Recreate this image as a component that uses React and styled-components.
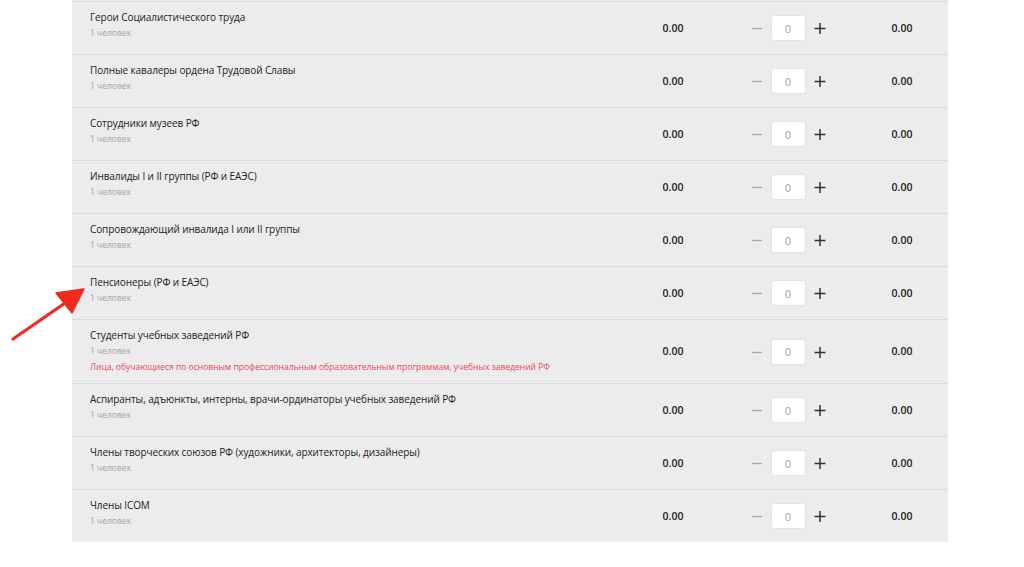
import React from "react";
import styled, { createGlobalStyle } from "styled-components";

const Global = createGlobalStyle`
  html, body { margin: 0; padding: 0; background: #fff; }
  body { font-family: "Open Sans", "Liberation Sans", sans-serif; color: #222; }
`;

const Page = styled.div`
  position: relative;
  width: 1024px;
  height: 567px;
  overflow: hidden;
  background: #fff;
`;

const Panel = styled.div`
  margin-left: 72px;
  width: 876px;
  padding-top: 1px;
  background: #ececec;
`;

const Row = styled.div`
  display: grid;
  grid-template-columns: 1fr 94px 136px 92px;
  align-items: center;
  min-height: 53px;
  border-top: 1px solid #d9d9d9;
  box-sizing: border-box;
`;

const Info = styled.div`
  padding: ${(p) => (p.$note ? "7px 0 8px 18px" : "7px 0 14px 18px")};
  display: flex;
  flex-direction: column;
`;

const Title = styled.div`
  font-size: 10px;
  letter-spacing: -0.1px;
  line-height: 16px;
  color: #222;
`;

const Sub = styled.div`
  font-size: 8.5px;
  line-height: 15px;
  color: #a4a4a4;
`;

const Note = styled.div`
  font-size: 8.5px;
  line-height: 17px;
  color: #e8485a;
`;

const Price = styled.div`
  text-align: center;
  font-size: 10.5px;
  font-weight: 600;
  color: #222;
  margin-top: -1px;
`;

const Stepper = styled.div`
  display: flex;
  align-items: center;
  justify-content: center;
  gap: 6px;
`;

const StepBtn = styled.span`
  width: 16px;
  display: flex;
  align-items: center;
  justify-content: center;
  color: ${(p) => (p.$muted ? "#a8a8a8" : "#333")};
`;

const Qty = styled.div`
  width: 35px;
  height: 26px;
  box-sizing: border-box;
  background: #fff;
  border: 1px solid #e2e2e2;
  border-radius: 3px;
  display: flex;
  align-items: center;
  justify-content: center;
  font-size: 11px;
  color: #a0a0a0;
`;

const Arrow = styled.svg`
  position: absolute;
  left: 0;
  top: 270px;
  width: 100px;
  height: 80px;
`;

const rows = [
  { t: "Герои Социалистического труда" },
  { t: "Полные кавалеры ордена Трудовой Славы" },
  { t: "Сотрудники музеев РФ" },
  { t: "Инвалиды I и II группы (РФ и ЕАЭС)" },
  { t: "Сопровождающий инвалида I или II группы" },
  { t: "Пенсионеры (РФ и ЕАЭС)" },
  {
    t: "Студенты учебных заведений РФ",
    n: "Лица, обучающиеся по основным профессиональным образовательным программам, учебных заведений РФ",
  },
  { t: "Аспиранты, адъюнкты, интерны, врачи-ординаторы учебных заведений РФ" },
  { t: "Члены творческих союзов РФ (художники, архитекторы, дизайнеры)" },
  { t: "Члены ICOM" },
];

const Minus = () => (
  <svg width="12" height="12" viewBox="0 0 12 12">
    <path d="M1 6.5h10" stroke="currentColor" strokeWidth="1.3" />
  </svg>
);

const Plus = () => (
  <svg width="12" height="12" viewBox="0 0 12 12">
    <path d="M0.5 6.5h11M6 1v11" stroke="currentColor" strokeWidth="1.5" />
  </svg>
);

export default function App() {
  return (
    <Page>
      <Global />
      <Panel>
        {rows.map((r, i) => (
          <Row key={i}>
            <Info $note={!!r.n}>
              <Title>{r.t}</Title>
              <Sub>1 человек</Sub>
              {r.n && <Note>{r.n}</Note>}
            </Info>
            <Price>0.00</Price>
            <Stepper>
              <StepBtn $muted>
                <Minus />
              </StepBtn>
              <Qty>0</Qty>
              <StepBtn>
                <Plus />
              </StepBtn>
            </Stepper>
            <Price>0.00</Price>
          </Row>
        ))}
      </Panel>
      <Arrow viewBox="0 270 100 80">
        <path d="M13 339 L68 301" stroke="#f02a1e" strokeWidth="3.2" strokeLinecap="round" />
        <path d="M84 289 L56 293 L72 313 Z" fill="#f02a1e" stroke="#f02a1e" strokeWidth="1.5" strokeLinejoin="round" />
      </Arrow>
    </Page>
  );
}
